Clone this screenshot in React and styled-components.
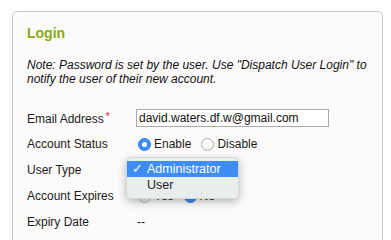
import React from "react";
import styled, { createGlobalStyle } from "styled-components";

const GlobalStyle = createGlobalStyle`
  html, body {
    margin: 0;
    padding: 0;
    background: #ffffff;
  }
  body {
    font-family: "Liberation Sans", Arial, Helvetica, sans-serif;
    font-size: 12px;
    color: #1c1c1c;
  }
`;

const Page = styled.div`
  padding: 11px 8px 0 12px;
`;

const Panel = styled.section`
  background: #fcfafb;
  border: 1px solid #c8c8c8;
  border-radius: 5px;
  padding: 13px 15px 24px 14px;
`;

const Title = styled.h3`
  margin: 0;
  font-size: 14px;
  line-height: 16px;
  font-weight: bold;
  color: #86ab17;
`;

const Note = styled.p`
  margin: 17px 0 19px;
  font-size: 12px;
  line-height: 14px;
  font-style: italic;
  color: #111;
`;

const Rows = styled.div`
  display: flex;
  flex-direction: column;
`;

const Row = styled.div`
  display: grid;
  grid-template-columns: 109px 1fr;
  align-items: center;
  height: 26px;
`;

const Label = styled.div`
  font-size: 12px;
  line-height: 14px;
`;

const Required = styled.span`
  color: #e0121b;
  font-size: 10px;
  vertical-align: 3px;
  margin-left: 2px;
`;

const Value = styled.div`
  position: relative;
  display: flex;
  align-items: center;
  gap: 2px;
  height: 100%;
`;

const TextInput = styled.input`
  box-sizing: border-box;
  width: 193px;
  height: 18px;
  margin: 0;
  padding: 0 2px;
  border: 1px solid #a9a9a9;
  background: #fff;
  font-family: inherit;
  font-size: 12px;
  color: #111;
  outline: none;
`;

const RadioGroup = styled.div`
  display: flex;
  align-items: center;
  margin-left: 2px;
`;

const RadioOption = styled.label`
  display: flex;
  align-items: center;
  gap: 3px;
  margin-right: 10px;
  font-size: 12px;
  line-height: 14px;
`;

const RadioDot = styled.span`
  box-sizing: border-box;
  width: 13px;
  height: 13px;
  border-radius: 50%;
  display: flex;
  align-items: center;
  justify-content: center;
  background: ${(p) => (p.$checked ? "#3b8ef5" : "linear-gradient(#ffffff, #f1f1f1)")};
  border: 1px solid ${(p) => (p.$checked ? "#2f7fe6" : "#adadad")};

  &::after {
    content: "";
    display: ${(p) => (p.$checked ? "block" : "none")};
    width: 5px;
    height: 5px;
    border-radius: 50%;
    background: #fff;
  }
`;

const Dash = styled.span`
  margin-left: 1px;
  font-size: 12px;
`;

const Menu = styled.ul`
  position: absolute;
  left: -10px;
  top: 0;
  z-index: 10;
  box-sizing: border-box;
  width: 113px;
  margin: 0;
  padding: 3px 0 5px;
  list-style: none;
  background: rgba(233, 238, 236, 0.97);
  border: 1px solid rgba(0, 0, 0, 0.1);
  border-radius: 5px;
  box-shadow: 0 3px 9px rgba(0, 0, 0, 0.28);
`;

const MenuItem = styled.li`
  display: flex;
  align-items: center;
  height: 16px;
  padding-left: 20px;
  position: relative;
  font-size: 12.5px;
  color: ${(p) => (p.$active ? "#fff" : "#1c1c1c")};
  background: ${(p) => (p.$active ? "#3c8df6" : "transparent")};
`;

const Check = styled.span`
  position: absolute;
  left: 5px;
  top: 0;
  font-family: "DejaVu Sans", sans-serif;
  font-size: 13px;
  line-height: 16px;
  font-weight: bold;
`;

function Radio({ checked, children }) {
  return (
    <RadioOption>
      <RadioDot $checked={checked} />
      {children}
    </RadioOption>
  );
}

export default function App() {
  return (
    <Page>
      <GlobalStyle />
      <Panel>
        <Title>Login</Title>
        <Note>
          Note: Password is set by the user. Use "Dispatch User Login" to
          notify the user of their new account.
        </Note>
        <Rows>
          <Row>
            <Label>
              Email Address<Required>*</Required>
            </Label>
            <Value>
              <TextInput defaultValue="david.waters.df.w@gmail.com" />
            </Value>
          </Row>
          <Row>
            <Label>Account Status</Label>
            <Value>
              <RadioGroup>
                <Radio checked>Enable</Radio>
                <Radio>Disable</Radio>
              </RadioGroup>
            </Value>
          </Row>
          <Row>
            <Label>User Type</Label>
            <Value>
              <Menu>
                <MenuItem $active>
                  <Check>✓</Check>
                  Administrator
                </MenuItem>
                <MenuItem>User</MenuItem>
              </Menu>
            </Value>
          </Row>
          <Row>
            <Label>Account Expires</Label>
            <Value>
              <RadioGroup>
                <Radio>Yes</Radio>
                <Radio checked>No</Radio>
              </RadioGroup>
            </Value>
          </Row>
          <Row>
            <Label>Expiry Date</Label>
            <Value>
              <Dash>--</Dash>
            </Value>
          </Row>
        </Rows>
      </Panel>
    </Page>
  );
}
